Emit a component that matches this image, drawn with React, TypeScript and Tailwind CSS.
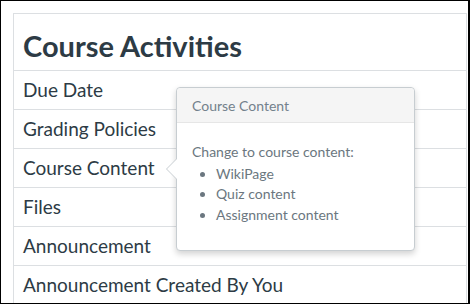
import React from "react";

const rows = [
  "Due Date",
  "Grading Policies",
  "Course Content",
  "Files",
  "Announcement",
  "Announcement Created By You",
];

export default function App() {
  return (
    <div
      className="w-[470px] h-[304px] overflow-hidden bg-white border border-black border-r-2 relative"
      style={{ fontFamily: "Lato, 'Open Sans', sans-serif" }}
    >
      <div className="pl-[12px] pt-[12px] pr-[1px]">
        <div className="border-l border-t border-r border-[#dcdfe2]">
          <div className="h-[57px] border-b border-[#dcdfe2] pl-[9px] pt-[15px]">
            <h1 className="text-[29px] leading-[34px] font-bold text-[#2d3b45]">Course Activities</h1>
          </div>
          {rows.map((r) => (
            <div
              key={r}
              className="h-[39px] border-b border-[#dcdfe2] pl-[9px] flex items-center text-[19px] text-[#2d3b45]"
            >
              {r}
            </div>
          ))}
        </div>
      </div>

      <div className="absolute left-[175px] top-[86px] w-[239px] h-[164px] bg-white border border-[#c7cdd1] rounded-[4px] shadow-[0_3px_6px_rgba(0,0,0,0.18)]">
        <div className="h-[35px] bg-[#f5f5f5] border-b border-[#e6e6e6] rounded-t-[4px] pl-[15px] flex items-center text-[14px] text-[#73818c]">
          Course Content
        </div>
        <div className="pl-[15px] pt-[19px] text-[14px] leading-[20.5px] text-[#6b7780]">
          <div>Change to course content:</div>
          <ul className="list-disc pl-[24px] mt-[1px]">
            <li>WikiPage</li>
            <li>Quiz content</li>
            <li>Assignment content</li>
          </ul>
        </div>
        <div className="absolute left-[-11px] top-[70px] w-0 h-0 border-y-[11px] border-y-transparent border-r-[11px] border-r-[#c7cdd1]" />
        <div className="absolute left-[-10px] top-[71px] w-0 h-0 border-y-[10px] border-y-transparent border-r-[10px] border-r-white" />
      </div>
    </div>
  );
}
